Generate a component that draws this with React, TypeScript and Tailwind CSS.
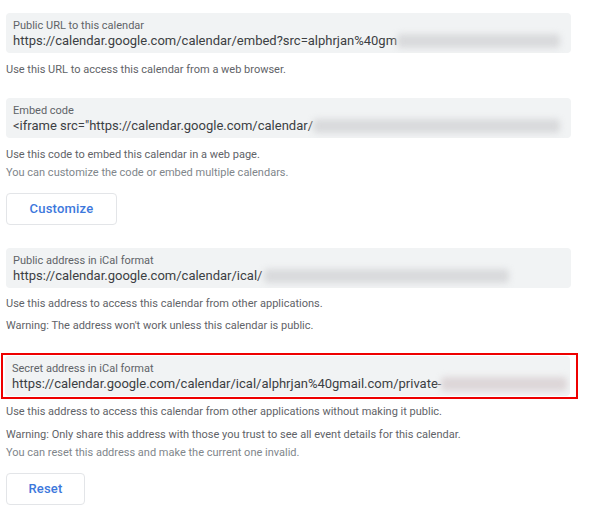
const font = { fontFamily: "Roboto, 'Liberation Sans', sans-serif" };

const Blur = ({ className }: { className: string }) => (
  <div className={`h-[14px] flex-1 rounded-sm bg-[#d9dadc] blur-[3px] ${className}`}></div>
);

const Field = ({
  label,
  value,
  blurClass,
}: {
  label: string;
  value: string;
  blurClass: string;
}) => (
  <div className="h-10 w-[565px] overflow-hidden rounded bg-[#f1f3f4] px-[7px] pt-[6px]">
    <div className="text-[11px] leading-[13px] text-[#5f6368]">{label}</div>
    <div className="flex items-center">
      <div className="whitespace-nowrap text-[13px] leading-[18px] text-[#3c4043]">
        {value}
      </div>
      <Blur className={blurClass} />
    </div>
  </div>
);

const Note = ({ children, light }: { children: React.ReactNode; light?: boolean }) => (
  <div className={`text-[11px] leading-[14px] ${light ? "text-[#80868b]" : "text-[#5f6368]"}`}>
    {children}
  </div>
);

const Button = ({ label, width }: { label: string; width: string }) => (
  <button
    className={`h-8 ${width} rounded border border-[#e3e5e8] bg-white text-[13px] font-medium tracking-[0.2px] text-[#3d78dc]`}
  >
    {label}
  </button>
);

export default function App() {
  return (
    <div className="h-[511px] w-[599px] bg-white pl-[6px]" style={font}>
      <div className="pt-[13px]">
        <Field
          label="Public URL to this calendar"
          value="https://calendar.google.com/calendar/embed?src=alphrjan%40gm"
          blurClass="mr-[4px]"
        />
      </div>
      <div className="mt-[10px]">
        <Note>Use this URL to access this calendar from a web browser.</Note>
      </div>

      <div className="mt-[21px]">
        <Field
          label="Embed code"
          value={'<iframe src="https://calendar.google.com/calendar/'}
          blurClass="mr-[4px]"
        />
      </div>
      <div className="mt-[10px] flex flex-col gap-[4px]">
        <Note>Use this code to embed this calendar in a web page.</Note>
        <Note light>You can customize the code or embed multiple calendars.</Note>
      </div>
      <div className="mt-[13px]">
        <Button label="Customize" width="w-[111px]" />
      </div>

      <div className="mt-[23px]">
        <Field
          label="Public address in iCal format"
          value="https://calendar.google.com/calendar/ical/"
          blurClass="ml-[2px] mr-[55px]"
        />
      </div>
      <div className="mt-[9px] flex flex-col gap-[8px]">
        <Note>Use this address to access this calendar from other applications.</Note>
        <Note>Warning: The address won't work unless this calendar is public.</Note>
      </div>

      <div className="-ml-[5px] mt-[20px] w-[577px] border-2 border-[#ee0000] py-[1px] pl-[2px]">
        <Field
          label="Secret address in iCal format"
          value="https://calendar.google.com/calendar/ical/alphrjan%40gmail.com/private-"
          blurClass="-mr-[4px] bg-[#ddd6d8]"
        />
      </div>
      <div className="mt-[6px] flex flex-col">
        <Note>Use this address to access this calendar from other applications without making it public.</Note>
        <div className="mt-[9px]">
          <Note>Warning: Only share this address with those you trust to see all event details for this calendar.</Note>
        </div>
        <div className="mt-[4px]">
          <Note light>You can reset this address and make the current one invalid.</Note>
        </div>
      </div>
      <div className="mt-[13px]">
        <Button label="Reset" width="w-[79px]" />
      </div>
    </div>
  );
}
